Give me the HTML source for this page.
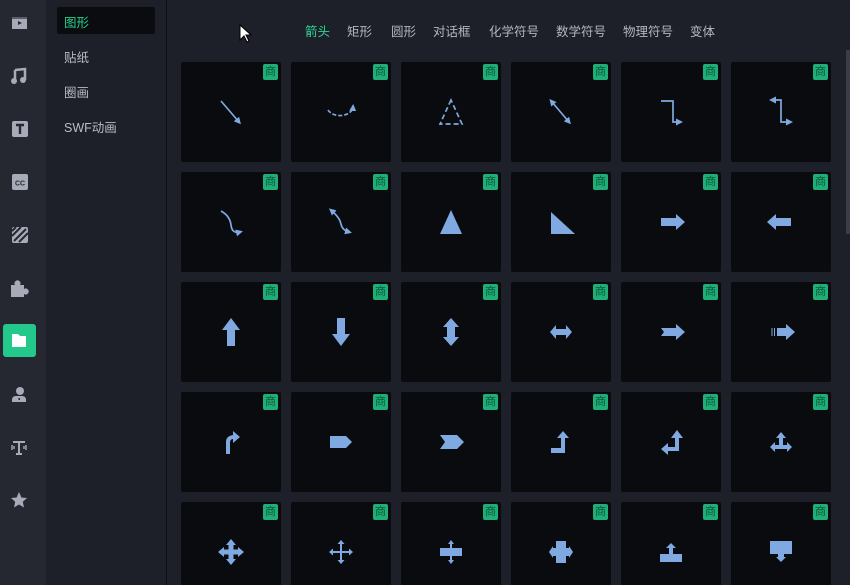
<!DOCTYPE html><html><head><meta charset="utf-8"><style>
*{margin:0;padding:0;box-sizing:border-box}
html,body{width:850px;height:585px;overflow:hidden}
body{background:#1e2029;font-family:"Liberation Sans","Noto Sans CJK SC",sans-serif;position:relative}
#bar{position:absolute;left:0;top:0;width:46px;height:585px;background:#252831}
#panel{position:absolute;left:46px;top:0;width:121px;height:585px;background:#1e2029;border-right:1px solid #0d0e12}
.ic{position:absolute;left:9px;width:20px;height:20px}
.li{position:absolute;left:18px;font-size:12.5px;color:#b9bcc6}
.sel{position:absolute;left:11px;top:7px;width:98px;height:27px;background:#0b0c0f;border-radius:2px}
.nav{position:absolute;top:21px;font-size:12.5px;color:#b3b6c0}
.card{position:absolute;width:100px;height:100px;background:#0a0b0e;border-radius:2px;overflow:hidden}
.b{position:absolute;right:3px;top:2px;width:15px;height:16px;background:#1fae78;border-radius:2px;color:#0b5a3a;font-size:11px;line-height:16px;text-align:center}
.card svg{position:absolute;left:0;top:0}
#sb{position:absolute;left:846px;top:50px;width:4px;height:184px;background:#3a3d47}
#grid{position:absolute;left:0;top:0;width:850px;height:585px;overflow:hidden}
</style></head><body>
<div id="bar">
<svg class="ic" style="top:13px" viewBox="0 0 20 20"><rect x="3" y="4" width="15" height="12" fill="#a7abb8"/><rect x="3" y="4" width="15" height="2" fill="#5a5e6a"/><path d="M9 8 L13 10 L9 12Z" fill="#252831"/></svg>
<svg class="ic" style="top:66px" viewBox="0 0 20 20"><path d="M6 4 L16 3 V14" stroke="#a7abb8" stroke-width="2.5" fill="none"/><circle cx="5" cy="15" r="3" fill="#a7abb8"/><circle cx="14" cy="14" r="3" fill="#a7abb8"/><path d="M6 4V15" stroke="#a7abb8" stroke-width="2.5"/></svg>
<svg class="ic" style="top:119px" viewBox="0 0 20 20"><rect x="3" y="2" width="16" height="16" rx="2" fill="#a7abb8"/><path d="M7 6H15M11 6V15" stroke="#252831" stroke-width="2.4"/></svg>
<svg class="ic" style="top:172px" viewBox="0 0 20 20"><rect x="3" y="2" width="16" height="16" rx="2" fill="#a7abb8"/><text x="11" y="13.5" font-size="7" font-weight="bold" text-anchor="middle" fill="#252831" font-family="Liberation Sans">CC</text></svg>
<svg class="ic" style="top:225px" viewBox="0 0 20 20"><rect x="3" y="2" width="16" height="16" rx="2" fill="#a7abb8"/><path d="M3 6L7 2M3 11L12 2M5 16L17 4M10 17L19 8" stroke="#252831" stroke-width="2"/></svg>
<svg class="ic" style="top:278px" viewBox="0 0 20 20"><path d="M2 7H6A3 3 0 1 1 11 7H15V11A3 3 0 1 1 15 16V19H2Z" fill="#a7abb8"/></svg>
<div style="position:absolute;left:3px;top:324px;width:33px;height:33px;background:#22c98a;border-radius:3px"></div>
<svg class="ic" style="top:331px" viewBox="0 0 20 20"><path d="M3 3H9L11 5H17V16H3Z" fill="#fff"/></svg>
<svg class="ic" style="top:385px" viewBox="0 0 20 20"><circle cx="11" cy="6" r="4" fill="#a7abb8"/><path d="M3 17V14A4 4 0 0 1 7 11H13A4 4 0 0 1 17 14V17Z" fill="#a7abb8"/><rect x="9.5" y="13" width="1.5" height="2" fill="#252831"/></svg>
<svg class="ic" style="top:437px" viewBox="0 0 20 20"><path d="M4 4H16V6H11V16H13V18H7V16H9V6H4Z" fill="#a7abb8"/><path d="M3 8V13M17 8V13M5 9V12M15 9V12" stroke="#a7abb8" stroke-width="1.4"/></svg>
<svg class="ic" style="top:490px" viewBox="0 0 20 20"><path d="M10 2L12.4 7.5 18 8 13.8 11.8 15 17.5 10 14.5 5 17.5 6.2 11.8 2 8 7.6 7.5Z" fill="#a7abb8"/></svg>
</div>
<div id="panel">
<div class="sel"></div>
<div class="li" style="top:12px;color:#26d08f">图形</div>
<div class="li" style="top:47px">贴纸</div>
<div class="li" style="top:82px">圈画</div>
<div class="li" style="top:117px">SWF动画</div>
</div>
<div class="nav" style="left:305px;color:#2bd493">箭头</div>
<div class="nav" style="left:347px">矩形</div>
<div class="nav" style="left:391px">圆形</div>
<div class="nav" style="left:433px">对话框</div>
<div class="nav" style="left:489px">化学符号</div>
<div class="nav" style="left:556px">数学符号</div>
<div class="nav" style="left:623px">物理符号</div>
<div class="nav" style="left:690px">变体</div>
<svg style="position:absolute;left:239px;top:24px" width="14" height="20" viewBox="0 0 14 20"><path d="M1 1V16L5 12L8 18L10 17L7 11H12Z" fill="#fff" stroke="#000" stroke-width="1"/></svg>
<div id="sb"></div>
<div id="grid"></div>
<script>
var C='#7fa9e0';
var M='<defs><marker id="a" markerWidth="7" markerHeight="7" refX="4" refY="3.5" orient="auto" markerUnits="userSpaceOnUse"><path d="M0 0L7 3.5L0 7Z" fill="'+C+'"/></marker><marker id="s" markerWidth="7" markerHeight="7" refX="3" refY="3.5" orient="auto-start-reverse" markerUnits="userSpaceOnUse"><path d="M0 0L7 3.5L0 7Z" fill="'+C+'"/></marker></defs>';
var L='stroke="'+C+'" stroke-width="1.7" fill="none"';
var F='fill="'+C+'"';
var I=[
'<path d="M40 39L58 60" '+L+' marker-end="url(#a)"/>',
'<path d="M37 48A13 9 0 0 0 62 45" '+L+' stroke-dasharray="4 2" marker-end="url(#a)"/>',
'<path d="M50 38L39 62H61Z" '+L+' stroke-width="2" stroke-dasharray="5 3"/>',
'<path d="M41 40L58 60" '+L+' marker-start="url(#s)" marker-end="url(#a)"/>',
'<path d="M40 39H52V60H59" '+L+' marker-end="url(#a)"/>',
'<path d="M42 38H50V60H59" '+L+' marker-start="url(#s)" marker-end="url(#a)"/>',
'<path d="M40 39Q49 44 50 53T59 60" '+L+' marker-end="url(#a)"/>',
'<path d="M41 39Q49 46 50 52T58 60" '+L+' marker-start="url(#s)" marker-end="url(#a)"/>',
'<path d="M50 38L39 62H61Z" '+F+'/>',
'<path d="M40 40V62H64Z" '+F+'/>',
'<path d="M40 46H55V42L64 50L55 58V54H40Z" '+F+'/>',
'<path d="M60 46H45V42L36 50L45 58V54H60Z" '+F+'/>',
'<path d="M46 64V48H41L50 36L59 48H54V64Z" '+F+'/>',
'<path d="M46 36V52H41L50 64L59 52H54V36Z" '+F+'/>',
'<path d="M50 36L58 45H54V55H58L50 64L42 55H46V45H42Z" '+F+'/>',
'<path d="M39 50L45 43V47H55V43L61 50L55 57V53H45V57Z" '+F+'/>',
'<path d="M40 46H55V42L64 50L55 58V54H40L43 50Z" '+F+'/>',
'<path d="M46 46H55V42L64 50L55 58V54H46Z" '+F+'/><path d="M41 46V54M43.5 46V54" stroke="'+C+'" stroke-width="1"/>',
'<path d="M45 62V50Q45 44 52 43V39L59 45L52 51V47Q49 47 49 51V62Z" '+F+'/>',
'<path d="M39 44H55L61 50L55 56H39Z" '+F+'/>',
'<path d="M39 43H56L63 50L56 57H39L44 50Z" '+F+'/>',
'<path d="M40 56H50V46H46L52 39L58 46H54V61H40Z" '+F+'/>',
'<path d="M58 46H62L56 38L50 46H54V55H47V51L40 57L47 63V59H58Z" '+F+'/>',
'<path d="M48 53V46H45L50 40L55 46H52V53H56V50L61 55L56 60V57H44V60L39 55L44 50V53Z" '+F+'/>',
'<path d="M47.5 47.5V43H45L50 37L55 43H52.5V47.5H57V45L63 50L57 55V52.5H52.5V57H55L50 63L45 57H47.5V52.5H43V55L37 50L43 45V47.5Z" '+F+'/>',
'<path d="M49 49V42H46.5L50 38L53.5 42H51V49H58V46.5L62 50L58 53.5V51H51V58H53.5L50 62L46.5 58H49V51H42V53.5L38 50L42 46.5V49Z" '+F+'/>',
'<path d="M39 46H49V42H47L50 38L53 42H51V46H61V54H51V58H53L50 62L47 58H49V54H39Z" '+F+'/>',
'<path d="M45 39H55V46H58V44L62 50L58 56V54H55V61H45V54H42V56L38 50L42 44V46H45Z" '+F+'/>',
'<path d="M39 52H48V46H45L50 41L55 46H52V52H61V60H39Z" '+F+'/>',
'<path d="M39 39H61V52H53V55H55L50 60L45 55H47V52H39Z" '+F+'/>'
];
var h='';
for(var i=0;i<30;i++){var r=Math.floor(i/6),c=i%6;var x=181+c*110,y=62+r*110;
h+='<div class="card" style="left:'+x+'px;top:'+y+'px"><svg width="100" height="100" viewBox="0 0 100 100">'+M+I[i]+'</svg><div class="b">商</div></div>';}
document.getElementById('grid').innerHTML=h;
</script>
</body></html>
